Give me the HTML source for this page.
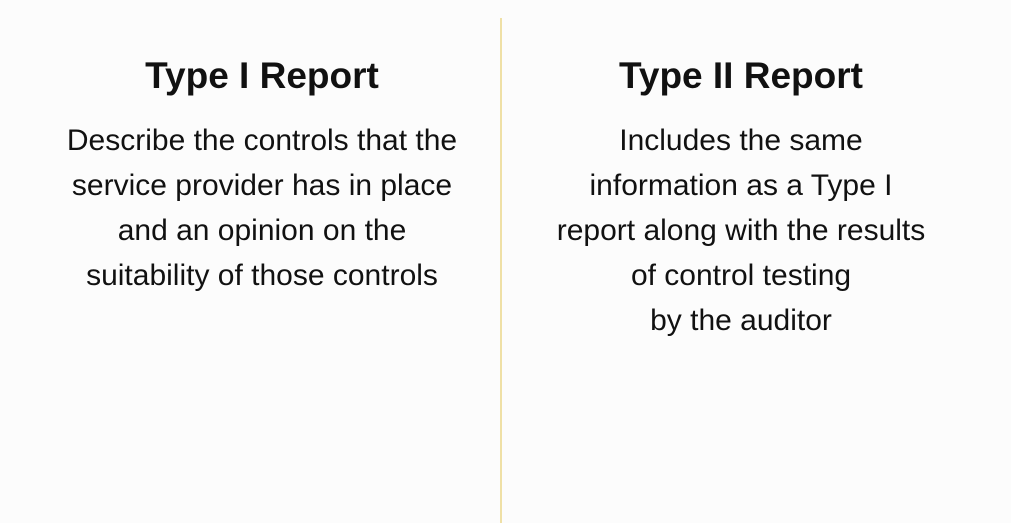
<!DOCTYPE html>
<html><head><style>
body{margin:0;width:1011px;height:523px;background:#fcfcfc;position:relative;overflow:hidden;font-family:"Liberation Sans",sans-serif;color:#111;}
h1{position:absolute;margin:0;width:480px;text-align:center;font-size:37px;font-weight:bold;line-height:44px;top:54px;}
p{position:absolute;margin:0;width:480px;text-align:center;font-size:30px;line-height:45px;top:118px;}
.line{position:absolute;left:500px;top:18px;width:2px;height:505px;background:#efe0a6;}
</style></head><body>
<h1 style="left:22px">Type I Report</h1>
<p style="left:22px">Describe the controls that the<br>service provider has in place<br>and an opinion on the<br>suitability of those controls</p>
<div class="line"></div>
<h1 style="left:501px">Type II Report</h1>
<p style="left:501px">Includes the same<br>information as a Type I<br>report along with the results<br>of control testing<br>by the auditor</p>
</body></html>
